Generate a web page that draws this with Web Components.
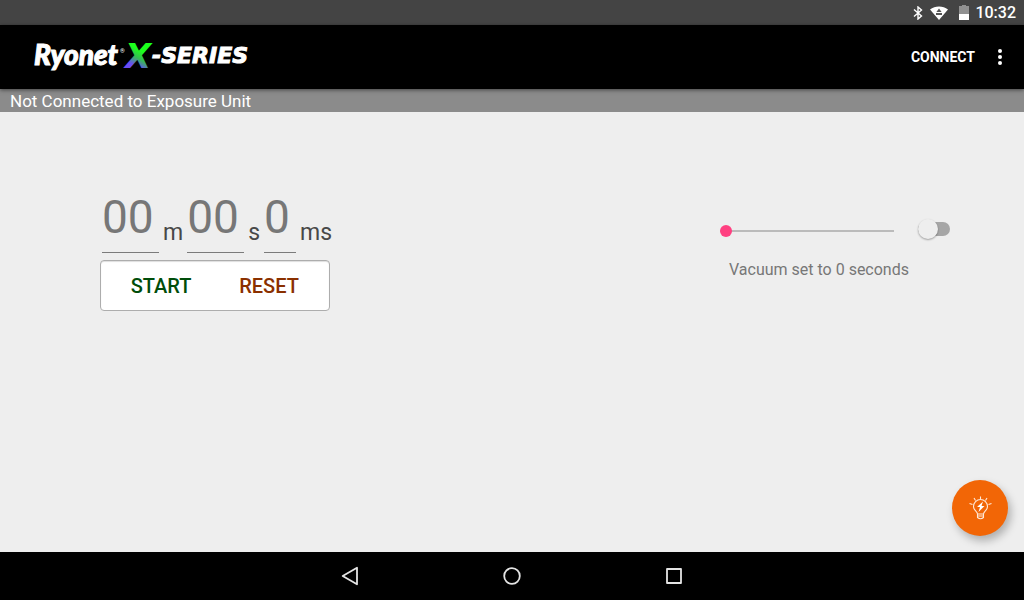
<!DOCTYPE html>
<html lang="en">
<head>
<meta charset="utf-8">
<title>Ryonet X-Series</title>
<style>
html, body { margin: 0; height: 100%; }
body { font-family: Roboto, "Liberation Sans", sans-serif; background: #eee; }
</style>
</head>
<body>
<exposure-app></exposure-app>
<script>
const define = (name, html, setup) => customElements.define(name, class extends HTMLElement {
  connectedCallback() {
    if (this.shadowRoot) return;
    const t = document.createElement('template');
    t.innerHTML = html;
    this.attachShadow({ mode: 'open' }).append(t.content.cloneNode(true));
    if (setup) setup(this, this.shadowRoot);
  }
});

define('status-bar', `
<style>
:host { display: flex; justify-content: flex-end; align-items: center; height: 25px; padding-right: 8px; background: #444; color: #fff; font-size: 16px; font-weight: 500; }
svg { display: block; }
.bt { margin-right: 7px; } .wifi { margin-right: 11px; } .bat { margin-right: 6px; }
</style>
<svg class="bt" width="10" height="14" viewBox="0 0 10 14" fill="none" stroke="#fff" stroke-width="1.4"><path d="M1 3.5 8.5 10 5 13V1l3.5 3L1 10.5"/></svg>
<svg class="wifi" width="18" height="14" viewBox="0 0 18 14"><path d="M0 3.4C5-.6 13-.6 18 3.4L9 14Z" fill="#fff"/><path d="m9 2.600 2.600 3.400H6.400ZM6 7h6v2H6Z" fill="#555"/></svg>
<svg class="bat" width="10" height="15" viewBox="0 0 10 15"><path d="M3 0h4v1h3v8H0V1h3Z" fill="#919191"/><path d="M0 9h10v6H0Z" fill="#fff"/></svg>
<time>10:32</time>`);

define('brand-logo', `
<style>
:host { display: block; }
svg { display: block; overflow: visible; }
.name { font: italic 900 28px Lato, sans-serif; }
.reg { font: 6px Roboto, sans-serif; }
.x { font: italic 700 34px "DejaVu Sans", sans-serif; }
.series { font: italic 700 22px "DejaVu Sans", sans-serif; }
.name, .series { stroke: #fff; stroke-width: 1px; }
</style>
<svg width="214" height="34" viewBox="0 0 214 34" fill="#fff">
<defs><linearGradient id="g" x1="0.7" y1="0" x2="0.3" y2="1"><stop offset=".35" stop-color="#1cff1c"/><stop offset=".55" stop-color="#35b957"/><stop offset=".75" stop-color="#6a4df5"/></linearGradient></defs>
<text class="name" x="0" y="25">Ryonet</text><text class="reg" x="86" y="13">®</text>
<text class="x" x="91" y="28" fill="url(#g)">X</text>
<text class="series" x="118" y="23">-SERIES</text></svg>`);

define('app-toolbar', `
<style>
:host { display: flex; align-items: center; height: 64px; padding: 0 8px 0 34px; background: #000; box-shadow: 0 1px 4px #0008; position: relative; }
brand-logo { margin-right: auto; }
button { border: 0; background: none; color: #fff; font: 700 14px/32px Roboto, sans-serif; padding: 0; }
.more { width: 32px; height: 32px; margin-left: 9px; display: grid; place-items: center; }
</style>
<brand-logo></brand-logo>
<button>CONNECT</button>
<button class="more" aria-label="More options"><svg width="4" height="16" viewBox="0 0 4 16" fill="#fff"><circle cx="2" cy="2" r="2"/><circle cx="2" cy="8" r="2"/><circle cx="2" cy="14" r="2"/></svg></button>`);

define('connection-banner', `
<style>:host { display: block; padding: 2px 10px 0; background: #8b8b8b; color: #fff; font-size: 17px; line-height: 21px; }</style>
<slot></slot>`);

define('time-field', `
<style>
:host { display: flex; align-items: flex-start; }
input { box-sizing: border-box; width: 57px; height: 62px; padding: 0 0 9px; border: 0; border-bottom: 1px solid #7b7b7b; border-radius: 0; background: none; font: 46px/52px Roboto, sans-serif; outline: 0; }
input::placeholder { color: #777; opacity: 1; }
:host([digits="1"]) input { width: 32px; }
label { font-size: 23px; line-height: 28px; color: #484848; padding: 28px 4px 0; }
</style>
<input id="v" inputmode="numeric"><label for="v"><slot></slot></label>`,
(host, root) => { root.querySelector('input').placeholder = host.getAttribute('value'); });

define('exposure-timer', `
<style>
:host { display: block; }
.fields { display: flex; padding-left: 2px; }
.actions { box-sizing: border-box; display: flex; width: 230px; height: 51px; margin-top: 7px; padding: 0 6px; background: #fff; border: 1px solid #adadad; border-radius: 4px; box-shadow: inset 0 1px 1px #0002; }
button { flex: 1 1 0; border: 0; background: none; padding: 0; font: 500 20px/24px Roboto, sans-serif; }
.start { color: #004d0a; } .reset { color: #8a3000; }
</style>
<div class="fields"><time-field value="00">m</time-field><time-field value="00">s</time-field><time-field value="0" digits="1">ms</time-field></div>
<div class="actions"><button class="start">START</button><button class="reset">RESET</button></div>`);

define('toggle-switch', `
<style>
:host { display: block; width: 32px; height: 20px; }
input { appearance: none; display: block; width: 32px; height: 20px; margin: 0; position: relative; }
input::after { content: ""; position: absolute; inset: 3px 0; border-radius: 7px; background: #a6a6a6; }
input::before { content: ""; position: absolute; z-index: 1; left: 0; top: 0; width: 20px; height: 20px; border-radius: 50%; background: #eee; box-shadow: 0 1px 2px #0005; }
input:checked::before { left: 12px; }
</style>
<input type="checkbox" role="switch" aria-label="Vacuum">`);

define('vacuum-control', `
<style>
:host { display: block; }
.row { display: flex; align-items: center; gap: 24px; }
input { appearance: none; width: 174px; height: 20px; margin: 0; background: linear-gradient(#bbb, #bbb) 0 11px / 100% 2px no-repeat; }
input::-webkit-slider-thumb { appearance: none; width: 12px; height: 12px; margin-top: 4px; border-radius: 50%; background: #ff4081; }
label { display: block; padding: 21px 0 0 9px; font-size: 16px; line-height: 20px; color: #777; }
</style>
<div class="row"><input id="s" type="range" min="0" max="30" value="0"><toggle-switch></toggle-switch></div>
<label for="s">Vacuum set to 0 seconds</label>`);

define('light-button', `
<style>
:host { display: block; }
button { display: grid; place-items: center; width: 56px; height: 56px; padding: 0; border: 0; border-radius: 50%; background: #f26606; box-shadow: 3px 5px 8px #0004; }
</style>
<button aria-label="Toggle light"><svg width="24" height="24" viewBox="0 0 24 24" fill="none" stroke="#ffe9d8" stroke-width="1.1"><path d="M9.500 18c0-2.500-4-3.500-4-7.500a7 7 0 0 1 14 0c0 4-4 5-4 7.500v3.500q-3 2.500-6 0ZM9.500 18h6M9.500 20h6M12.500 .5v2.500M6 2l1.500 2.500M19 2l-1.500 2.500M1.500 7.500l3 1M23.500 7.500l-3 1"/><path d="M15 5.500 9 11h3L10.500 16l6-6h-3l1.500-4.500Z" fill="#fff" stroke="none"/></svg></button>`);

define('system-nav', `
<style>
:host { display: flex; justify-content: center; align-items: center; gap: 138px; height: 48px; background: #000; }
button { display: block; padding: 0; border: 0; background: none; width: 24px; height: 24px; }
svg { display: block; fill: none; stroke: #e4e4e4; stroke-width: 1.8; stroke-linejoin: round; }
</style>
<button aria-label="Back"><svg width="24" height="24"><path d="M19 3.700v16.600L4.700 12Z"/></svg></button>
<button aria-label="Home"><svg width="24" height="24"><circle cx="12" cy="12" r="7.800"/></svg></button>
<button aria-label="Recent apps"><svg width="24" height="24"><path d="M5 5h14v14H5Z"/></svg></button>`);

define('exposure-app', `
<style>
:host { display: flex; flex-direction: column; min-height: 100vh; background: #eee; }
main { flex: 1; display: flex; flex-direction: column; justify-content: space-between; }
.controls { display: flex; justify-content: space-between; padding: 79px 74px 0 100px; }
vacuum-control { padding-top: 28px; }
light-button { align-self: flex-end; margin: 16px; }
</style>
<status-bar></status-bar>
<app-toolbar></app-toolbar>
<connection-banner>Not Connected to Exposure Unit</connection-banner>
<main><div class="controls"><exposure-timer></exposure-timer><vacuum-control></vacuum-control></div><light-button></light-button></main>
<system-nav></system-nav>`);
</script>
</body>
</html>
